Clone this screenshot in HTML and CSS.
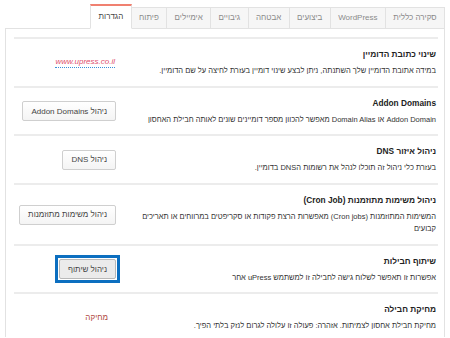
FILE: index.html
```html
<!DOCTYPE html>
<html lang="he" dir="rtl">
<head>
<meta charset="utf-8">
<link rel="stylesheet" href="styles.css">
</head>
<body>
<div class="wrap">
  <nav class="tabs">
    <span class="tab">סקירה כללית</span>
    <span class="tab">WordPress</span>
    <span class="tab">ביצועים</span>
    <span class="tab">אבטחה</span>
    <span class="tab">גיבויים</span>
    <span class="tab">אימיילים</span>
    <span class="tab">פיתוח</span>
    <span class="tab active">הגדרות</span>
  </nav>
  <section class="panel">
    <div class="row">
      <div class="text">
        <div class="title">שינוי כתובת הדומיין</div>
        <div class="desc">במידה אתובת הדומיין שלך השתנתה, ניתן לבצע שינוי דומיין בעזרת לחיצה על שם הדומיין.</div>
      </div>
      <div class="action"><span class="domain">www.upress.co.il</span></div>
    </div>
    <div class="row">
      <div class="text">
        <div class="title">Addon Domains</div>
        <div class="desc">Addon Domain או Domain Alias מאפשר להכוון מספר דומיינים שונים לאותה חבילת האחסון</div>
      </div>
      <div class="action"><button class="btn">ניהול Addon Domains</button></div>
    </div>
    <div class="row">
      <div class="text">
        <div class="title">ניהול איזור DNS</div>
        <div class="desc">בעזרת כלי ניהול זה תוכלו לנהל את רשומות הDNS בדומיין.</div>
      </div>
      <div class="action"><button class="btn">ניהול DNS</button></div>
    </div>
    <div class="row">
      <div class="text">
        <div class="title">ניהול משימות מתוזמנות (Cron Job)</div>
        <div class="desc">המשימות המתוזמנות (Cron jobs) מאפשרות הרצת פקודות או סקריפטים במרווחים או תאריכים קבועים</div>
      </div>
      <div class="action"><button class="btn">ניהול משימות מתוזמנות</button></div>
    </div>
    <div class="row">
      <div class="text">
        <div class="title">שיתוף חבילות</div>
        <div class="desc">אפשרות זו תאפשר לשלוח גישה לחבילה זו למשתמש uPress אחר</div>
      </div>
      <div class="action"><span class="ring"><button class="btn focused">ניהול שיתוף</button></span></div>
    </div>
    <div class="row">
      <div class="text">
        <div class="title">מחיקת חבילה</div>
        <div class="desc">מחיקת חבילת אחסון לצמיתות. אזהרה: פעולה זו עלולה לגרום לנזק בלתי הפיך.</div>
      </div>
      <div class="action"><span class="delete">מחיקה</span></div>
    </div>
  </section>
</div>
</body>
</html>
```

FILE: styles.css
```css
html, body {
  margin: 0;
  padding: 0;
  background: #fff;
  overflow: hidden;
}
body {
  font-family: "Liberation Sans", Arial, sans-serif;
  color: #333;
  height: 338px;
}
.wrap {
  margin: 0 5px;
  padding-top: 5px;
}
.tabs {
  display: flex;
  align-items: flex-end;
  height: 24px;
  position: relative;
  z-index: 1;
  margin-bottom: -1px;
}
.tab {
  box-sizing: border-box;
  height: 22px;
  padding: 0 7.4px;
  border: 1px solid #e2e2e2;
  border-left: none;
  background: #f6f6f6;
  color: #8a8a8a;
  font-size: 8px;
  line-height: 20px;
  white-space: nowrap;
}
.tab:first-child {
  border-right: 1px solid #e2e2e2;
}
.tab.active {
  height: 25px;
  background: #fff;
  color: #444;
  border-top: 2px solid #f08070;
  border-bottom-color: #fff;
  border-left: 1px solid #e2e2e2;
  line-height: 22px;
}
.panel {
  box-sizing: border-box;
  border: 1px solid #e2e2e2;
  border-bottom: none;
  padding: 8px 6px 0 8px;
  height: 309px;
}
.row {
  display: grid;
  grid-template-columns: 1fr 102px;
  column-gap: 12px;
  align-items: center;
  border-top: 2px solid #ececec;
  padding: 9px 0 8px;
}
.text {
  padding-right: 2px;
}
.title {
  font-size: 8.3px;
  font-weight: bold;
  color: #222;
  line-height: 12px;
  margin-bottom: 5px;
}
.desc {
  font-size: 7.5px;
  line-height: 12.5px;
  color: #333;
}
.action {
  display: flex;
  justify-content: flex-start;
  align-items: center;
}
.btn {
  font-family: "Liberation Sans", Arial, sans-serif;
  font-size: 8px;
  color: #444;
  height: 20px;
  padding: 0 8px;
  border: 1px solid #cfcfcf;
  border-radius: 2px;
  background: linear-gradient(#ffffff, #f4f4f4);
  white-space: nowrap;
}
.ring {
  display: inline-flex;
  border: 3px solid #0c6fc0;
  padding: 1px;
  margin-right: -4px;
}
.btn.focused {
  background: #ebebeb;
  border-color: #b8b8b8;
}
.domain {
  font-size: 8px;
  font-style: italic;
  color: #e0506e;
  border-bottom: 1px dotted #3a8fd8;
  margin-right: 1px;
  line-height: 10px;
}
.delete {
  font-size: 8px;
  color: #b0463c;
  margin-right: 8px;
}
```
